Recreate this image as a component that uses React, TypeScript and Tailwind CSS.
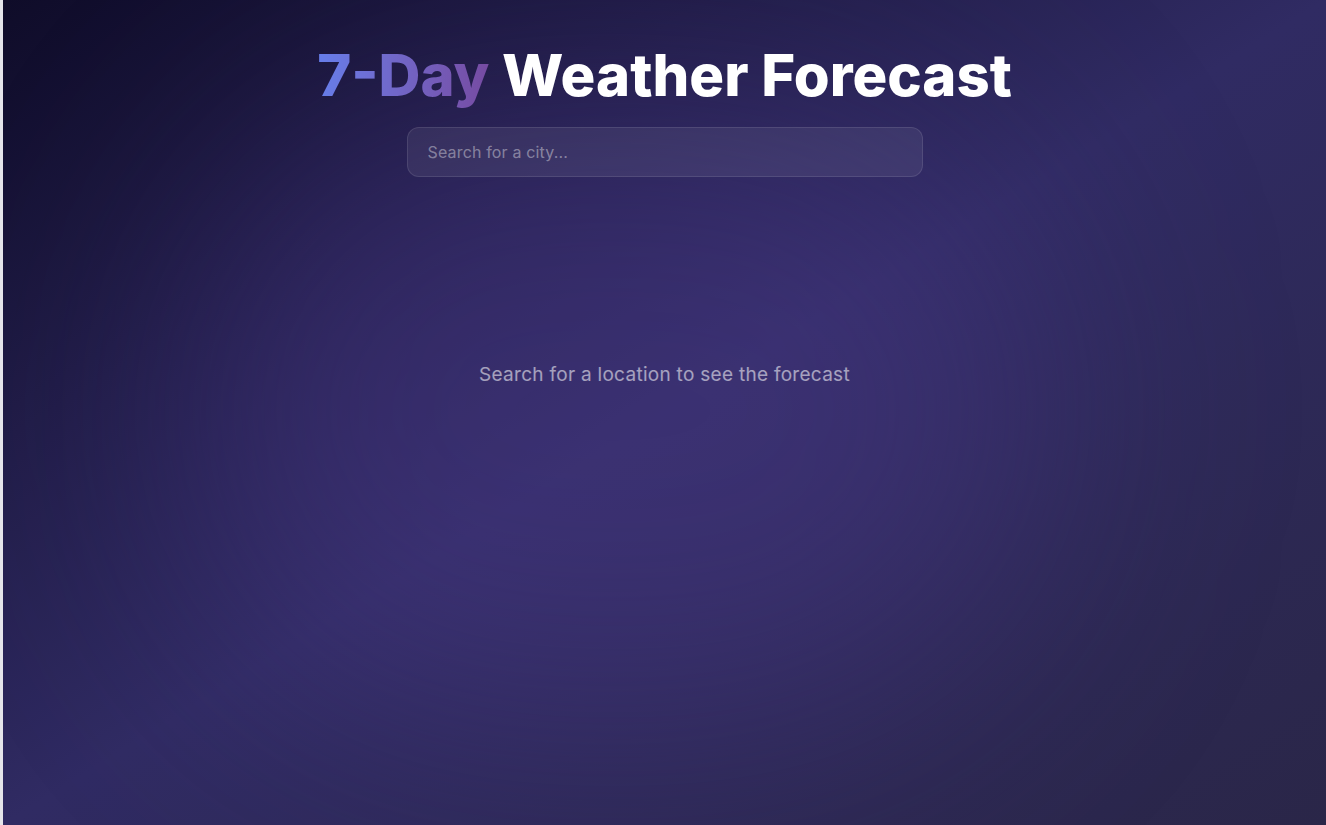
export default function App() {
  return (
    <div
      className="relative min-h-screen overflow-hidden bg-gradient-to-br from-[#0f0c29] via-[#302b63] to-[#2a2648] border-l-[3px] border-[#e5e5ea]"
      style={{ fontFamily: 'Inter, "Noto Sans", sans-serif' }}
    >
      {/* soft glow */}
      <div className="pointer-events-none absolute left-[180px] top-[100px] h-[620px] w-[860px] rounded-full bg-[#4a3a8a]/40 blur-[120px]" />

      <div className="relative mx-auto flex max-w-[516px] flex-col items-center pt-[44px]">
        <h1 className="whitespace-nowrap text-[58px] font-extrabold leading-[1.1] text-white">
          <span className="bg-gradient-to-r from-[#667eea] to-[#764ba2] bg-clip-text text-transparent">
            7-Day
          </span>{' '}
          Weather Forecast
        </h1>

        <input
          type="text"
          placeholder="Search for a city..."
          className="mt-[19px] h-[50px] w-full rounded-xl border border-white/10 bg-white/[0.07] px-5 text-base tracking-[0.01em] text-white outline-none placeholder:text-white/40"
        />

        <p className="mt-[184px] whitespace-nowrap text-[19px] tracking-[0.015em] text-white/55">
          Search for a location to see the forecast
        </p>
      </div>
    </div>
  )
}
